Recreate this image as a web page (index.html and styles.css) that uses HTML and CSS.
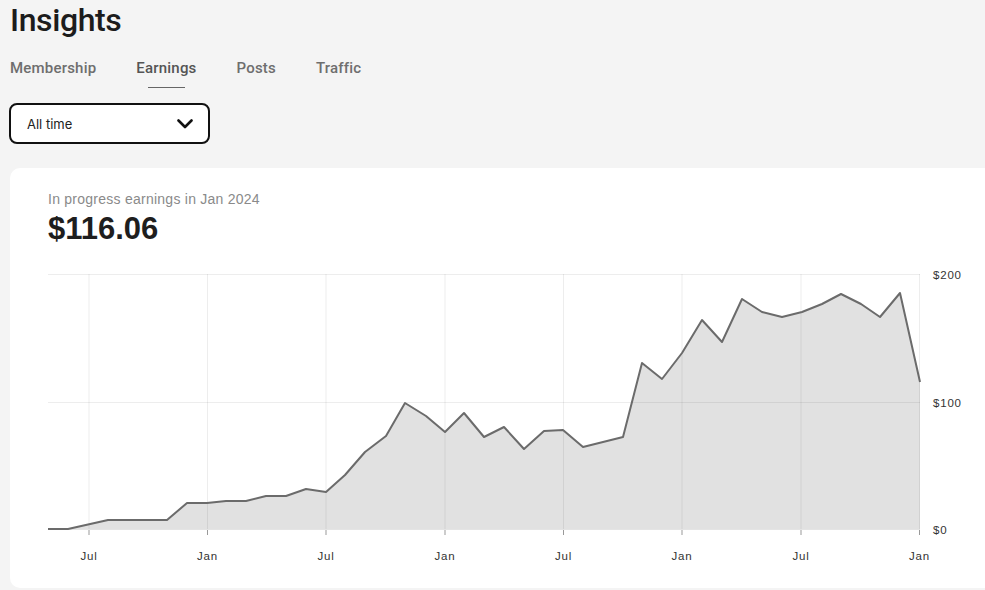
FILE: index.html
```html
<!DOCTYPE html>
<html lang="en">
<head>
<meta charset="utf-8">
<title>Insights</title>
<link rel="stylesheet" href="styles.css">
</head>
<body>
<header class="page-head">
  <h1 class="title">Insights</h1>
  <nav class="tabs">
    <a class="tab">Membership</a>
    <a class="tab active">Earnings</a>
    <a class="tab">Posts</a>
    <a class="tab">Traffic</a>
  </nav>
  <button class="select">
    <span>All time</span>
    <svg class="chev" width="16" height="10" viewBox="0 0 16 10"><path d="M1.5 1.5 L8 8 L14.5 1.5" fill="none" stroke="#111" stroke-width="2.6" stroke-linecap="round" stroke-linejoin="round"/></svg>
  </button>
</header>
<section class="card">
  <div class="summary">
    <div class="sub">In progress earnings in Jan 2024</div>
    <div class="amount">$116.06</div>
  </div>
  <svg class="chart" width="975" height="310" viewBox="10 260 975 310">
    <polygon class="area" points="48,529.5 48,529 68,529 88,524.5 108,520 127,520 147,520 167,520 187,503 207,503 226,501 246,501 266,496 286,496 306,489 326,492 345,475 365,452 386,436 405,403 426,416 445,432 464,413 484,437 504,427 524,449 544,431 563,430 583,447 603,442 623,437 642,363 662,379 682,353 702,320 722,342 742,299 762,312 782,317 802,312 822,304 841,294 861,304 880,317 900,293 920,382 920,529.5"/>
    <g class="grid">
      <line x1="48" y1="274.5" x2="920" y2="274.5"/>
      <line x1="48" y1="402.5" x2="920" y2="402.5"/>
      <line x1="89" y1="274" x2="89" y2="529"/>
      <line x1="207.5" y1="274" x2="207.5" y2="529"/>
      <line x1="326" y1="274" x2="326" y2="529"/>
      <line x1="445" y1="274" x2="445" y2="529"/>
      <line x1="563.5" y1="274" x2="563.5" y2="529"/>
      <line x1="682" y1="274" x2="682" y2="529"/>
      <line x1="801" y1="274" x2="801" y2="529"/>
      <line x1="919.5" y1="274" x2="919.5" y2="529"/>
    </g>
    <line class="axis" x1="48" y1="529.5" x2="920" y2="529.5"/>
    <g class="ticks">
      <line x1="89" y1="530" x2="89" y2="535"/>
      <line x1="207.5" y1="530" x2="207.5" y2="535"/>
      <line x1="326" y1="530" x2="326" y2="535"/>
      <line x1="445" y1="530" x2="445" y2="535"/>
      <line x1="563.5" y1="530" x2="563.5" y2="535"/>
      <line x1="682" y1="530" x2="682" y2="535"/>
      <line x1="801" y1="530" x2="801" y2="535"/>
      <line x1="919.5" y1="530" x2="919.5" y2="535"/>
    </g>
    <polyline class="line" points="48,529 68,529 88,524.5 108,520 127,520 147,520 167,520 187,503 207,503 226,501 246,501 266,496 286,496 306,489 326,492 345,475 365,452 386,436 405,403 426,416 445,432 464,413 484,437 504,427 524,449 544,431 563,430 583,447 603,442 623,437 642,363 662,379 682,353 702,320 722,342 742,299 762,312 782,317 802,312 822,304 841,294 861,304 880,317 900,293 920,382"/>
    <g class="ylab">
      <text x="933" y="278.5">$200</text>
      <text x="933" y="406.5">$100</text>
      <text x="933" y="533.5">$0</text>
    </g>
    <g class="xlab">
      <text x="89" y="559.5">Jul</text>
      <text x="207.5" y="559.5">Jan</text>
      <text x="326" y="559.5">Jul</text>
      <text x="445" y="559.5">Jan</text>
      <text x="563.5" y="559.5">Jul</text>
      <text x="682" y="559.5">Jan</text>
      <text x="801" y="559.5">Jul</text>
      <text x="919.5" y="559.5">Jan</text>
    </g>
  </svg>
</section>
</body>
</html>
```
FILE: styles.css
```css
html, body {
  margin: 0;
  padding: 0;
}
body {
  background: #f4f4f4;
  width: 985px;
  height: 590px;
  overflow: hidden;
  font-family: "Liberation Sans", Arial, sans-serif;
  color: #1a1a1a;
}
.page-head {
  padding: 0 0 0 10px;
}
.title {
  margin: 0;
  font-family: Roboto, "Liberation Sans", sans-serif;
  font-weight: 500;
  font-size: 32px;
  letter-spacing: -0.4px;
  line-height: 40px;
  color: #1c1c1c;
  height: 42px;
}
.tabs {
  display: flex;
  gap: 40px;
  height: 48px;
  align-items: flex-start;
}
.tab {
  position: relative;
  font-family: Roboto, "Liberation Sans", sans-serif;
  font-weight: 500;
  font-size: 15px;
  letter-spacing: 0.2px;
  font-variant-ligatures: none;
  line-height: 20px;
  padding-top: 16px;
  color: #6e6e6e;
}
.tab.active {
  color: #555;
}
.tab.active::after {
  content: "";
  position: absolute;
  left: 50%;
  top: 45px;
  width: 37px;
  height: 1px;
  margin-left: -18.5px;
  background: #666;
}
.select {
  margin: 13px 0 0 -1px;
  width: 201px;
  height: 41px;
  box-sizing: border-box;
  border: 2.6px solid #111;
  border-radius: 8px;
  background: #fff;
  display: flex;
  align-items: center;
  justify-content: space-between;
  padding: 0 15px 0 16px;
  font-family: Inter, "Liberation Sans", sans-serif;
  font-size: 13px;
  color: #222;
}
.chev {
  display: block;
}
.card {
  margin: 24px 0 0 10px;
  width: 1000px;
  height: 420px;
  background: #fff;
  border-radius: 10px;
}
.summary {
  padding: 23px 0 0 38px;
}
.sub {
  font-size: 14px;
  line-height: 17px;
  color: #8a8a8a;
  letter-spacing: 0.25px;
}
.amount {
  margin-top: 3px;
  font-size: 31px;
  font-weight: 700;
  line-height: 36px;
  color: #1e1e1e;
  letter-spacing: 0;
}
.chart {
  display: block;
  margin-top: 13px;
}
.area {
  fill: #e1e1e1;
}
.grid line {
  stroke: rgba(0, 0, 0, 0.07);
  stroke-width: 1;
}
.axis {
  stroke: #e4e4e4;
  stroke-width: 1;
}
.ticks line {
  stroke: #999;
  stroke-width: 1;
}
.line {
  fill: none;
  stroke: #6b6b6b;
  stroke-width: 2;
  stroke-linejoin: round;
}
.ylab text {
  font-family: "Liberation Sans", Arial, sans-serif;
  font-size: 11.5px;
  letter-spacing: 0.8px;
  fill: #333;
}
.xlab text {
  font-family: "Liberation Sans", Arial, sans-serif;
  font-size: 11.5px;
  letter-spacing: 0.8px;
  fill: #333;
  text-anchor: middle;
}
```
